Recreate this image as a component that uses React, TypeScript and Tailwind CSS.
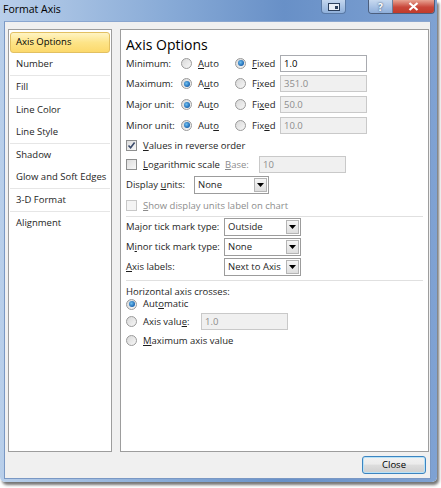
import type { ReactNode } from 'react';

function Radio({ checked = false }: { checked?: boolean }) {
  return (
    <span className="w-[11px] h-[11px] shrink-0 rounded-full border border-[#9a9a9a] bg-[linear-gradient(135deg,#d8d8d8,#f7f7f7)] flex items-center justify-center">
      {checked && (
        <span className="w-[6px] h-[6px] rounded-full bg-[radial-gradient(circle_at_40%_40%,#6fc0f0,#1a64b0_70%)]" />
      )}
    </span>
  );
}

function Check({ checked = false, disabled = false }: { checked?: boolean; disabled?: boolean }) {
  return (
    <span
      className={`w-[11px] h-[11px] shrink-0 border flex items-center justify-center ${
        disabled ? 'border-[#c8c8c8] bg-[#f4f4f4]' : 'border-[#8e8f8f] bg-[linear-gradient(135deg,#dcdcdc,#f8f8f8)]'
      }`}
    >
      {checked && (
        <svg width="9" height="9" viewBox="0 0 9 9">
          <path d="M1.5 4.5 L3.6 6.8 L7.6 1.6" fill="none" stroke="#3a4a6a" strokeWidth="1.6" />
        </svg>
      )}
    </span>
  );
}

function Field({ value, disabled = false, w }: { value: string; disabled?: boolean; w: string }) {
  return (
    <div
      className={`${w} h-[17px] border flex items-center pl-[3px] ${
        disabled ? 'bg-[#f0f0f0] border-[#c9c9c9] text-[#8d8d8d]' : 'bg-white border-[#a9abb0] text-black'
      }`}
    >
      {value}
    </div>
  );
}

function Select({ value, w }: { value: string; w: string }) {
  return (
    <div className={`${w} h-[18px] border border-[#9c9c9c] bg-white flex items-center justify-between pl-[3px] pr-px`}>
      <span className="whitespace-nowrap">{value}</span>
      <span className="w-[13px] h-[14px] border border-[#b5b5b5] bg-[linear-gradient(#f6f6f6,#dedede)] flex items-center justify-center shrink-0">
        <svg width="7" height="4" viewBox="0 0 7 4">
          <path d="M0 0 H7 L3.5 4 Z" fill="#000" />
        </svg>
      </span>
    </div>
  );
}

function UnitRow({ label, auto, fixed, value, autoFixed }: { label: string; auto: ReactNode; fixed: ReactNode; value: string; autoFixed: boolean }) {
  return (
    <div className="h-[20.67px] flex items-center">
      <span className="w-[55px]">{label}</span>
      <Radio checked={!autoFixed} />
      <span className="ml-[6px] w-[37px]">{auto}</span>
      <Radio checked={autoFixed} />
      <span className="ml-[6px] w-[28px]">{fixed}</span>
      <Field value={value} disabled={!autoFixed} w="w-[87px]" />
    </div>
  );
}

const navGroups = [
  ['Axis Options', 'Number'],
  ['Fill'],
  ['Line Color', 'Line Style'],
  ['Shadow', 'Glow and Soft Edges'],
  ['3-D Format'],
  ['Alignment'],
];

export default function App() {
  return (
    <div className="w-[441px] h-[488px] bg-white font-['Open_Sans',sans-serif] text-[9.5px] text-[#1e1e1e] leading-none">
      <div className="w-[437px] h-[482px] flex flex-col bg-[linear-gradient(to_right,#b9cfea,#86a9d6_40%,#6890c7_65%,#7fa2d3)] rounded-b-[5px] shadow-[2px_3px_3px_rgba(0,0,0,0.55)] pl-[4px] pr-[6px] pb-[4px]">
        {/* title bar */}
        <div className="h-[21px] flex items-start shrink-0 relative">
          <span className="mt-[4px] -ml-[1px] text-[10.5px] text-black">Format Axis</span>
          <div className="absolute left-[317px] top-0 w-[25px] h-[14px] rounded-b-[4px] border border-t-0 border-[#5a7aa6] bg-[linear-gradient(#c3d6ee,#8fb0db)] flex items-center justify-center">
            <svg width="12" height="8" viewBox="0 0 12 8">
              <rect x="0.5" y="0.5" width="11" height="7" fill="#e8eef7" stroke="#2b3f5c" />
              <rect x="7" y="3" width="3" height="3" fill="#2b3f5c" />
            </svg>
          </div>
          <div className="absolute left-[364px] top-0 h-[14px] flex rounded-b-[4px] border border-t-0 border-[#4c5f7e] overflow-hidden">
            <div className="w-[24px] bg-[linear-gradient(#c7d9ef,#8eaedb)] flex items-center justify-center border-r border-[#6a7f9c] text-[10px] font-bold text-white [text-shadow:0_0_2px_#1c3150]">?</div>
            <div className="w-[41px] bg-[linear-gradient(#e8a493,#c9473a_55%,#c13a2a)] flex items-center justify-center">
              <svg width="11" height="9" viewBox="0 0 11 9">
                <path d="M1.5 1 L9.5 8 M9.5 1 L1.5 8" stroke="#fff" strokeWidth="2.2" />
              </svg>
            </div>
          </div>
        </div>

        {/* client area */}
        <div className="flex-1 bg-[#f0f0f0] border border-[#7a98c4] border-t-[#8aa6cf] flex flex-col pt-[7px] pl-[3px] pr-[1px] pb-[4px]">
          <div className="flex gap-[8px] h-[423px]">
            {/* nav */}
            <div className="w-[104px] bg-white border border-[#9d9d9d] pt-px px-px">
              {navGroups.map((group, gi) => (
                <div key={gi} className={gi > 0 ? 'border-t border-[#e6e6e6]' : ''}>
                  {group.map((item) =>
                    item === 'Axis Options' ? (
                      <div key={item} className="h-[22px] flex items-center">
                        <div className="w-full h-[21px] rounded-[3px] border border-[#e2c062] bg-[linear-gradient(#fff4c4,#fde488_50%,#fcd96c)] flex items-center pl-[5px] text-black">
                          {item}
                        </div>
                      </div>
                    ) : (
                      <div key={item} className="h-[22px] flex items-center pl-[6px]">
                        {item}
                      </div>
                    ),
                  )}
                </div>
              ))}
            </div>

            {/* options */}
            <div className="flex-1 bg-white border border-[#9d9d9d] px-[5px]">
              <div className="mt-[7px] h-[16px] flex items-center text-[14px] text-black">Axis Options</div>
              <UnitRow label="Minimum:" auto={<><u>A</u>uto</>} fixed={<><u>F</u>ixed</>} value="1.0" autoFixed />
              <UnitRow label="Maximum:" auto={<>A<u>u</u>to</>} fixed={<>F<u>i</u>xed</>} value="351.0" autoFixed={false} />
              <UnitRow label="Major unit:" auto={<>Au<u>t</u>o</>} fixed={<>Fi<u>x</u>ed</>} value="50.0" autoFixed={false} />
              <UnitRow label="Minor unit:" auto={<>Aut<u>o</u></>} fixed={<>Fix<u>e</u>d</>} value="10.0" autoFixed={false} />

              <div className="h-[20px] flex items-center gap-[6px]">
                <Check checked />
                <span><u>V</u>alues in reverse order</span>
              </div>
              <div className="h-[18px] flex items-center">
                <Check />
                <span className="ml-[6px] w-[82px]"><u>L</u>ogarithmic scale</span>
                <span className="w-[34px] text-[#8d8d8d]"><u>B</u>ase:</span>
                <Field value="10" disabled w="w-[87px]" />
              </div>
              <div className="h-[23px] flex items-center">
                <span className="w-[68px]">Display <u>u</u>nits:</span>
                <Select value="None" w="w-[75px]" />
              </div>
              <div className="h-[18px] flex items-center gap-[6px] text-[#8d8d8d]">
                <Check disabled />
                <span><u>S</u>how display units label on chart</span>
              </div>
              <div className="h-px mt-px bg-[#e0e0e0]" />

              <div className="h-[20px] flex items-center">
                <span className="w-[98px]">Major tick mark type:</span>
                <Select value="Outside" w="w-[77px]" />
              </div>
              <div className="h-[20px] flex items-center">
                <span className="w-[98px]">M<u>i</u>nor tick mark type:</span>
                <Select value="None" w="w-[77px]" />
              </div>
              <div className="h-[21px] flex items-center">
                <span className="w-[98px]"><u>A</u>xis labels:</span>
                <Select value="Next to Axis" w="w-[77px]" />
              </div>
              <div className="h-px mt-[2px] bg-[#e0e0e0]" />

              <div className="h-[16px] flex items-end">Horizontal axis crosses:</div>
              <div className="h-[15px] flex items-center gap-[6px]">
                <Radio checked />
                <span>Aut<u>o</u>matic</span>
              </div>
              <div className="h-[20px] flex items-center">
                <Radio />
                <span className="ml-[6px] w-[58px]">Axis valu<u>e</u>:</span>
                <Field value="1.0" disabled w="w-[87px]" />
              </div>
              <div className="h-[18px] flex items-center gap-[6px]">
                <Radio />
                <span><u>M</u>aximum axis value</span>
              </div>
            </div>
          </div>

          <div className="flex justify-end mt-[4px] pr-[3px]">
            <button className="w-[64px] h-[18px] rounded-[3px] border border-[#3c84c0] bg-[linear-gradient(#f2f2f2,#ebebeb_45%,#dddddd_50%,#cfcfcf)] shadow-[inset_0_0_0_1px_#b8e2f8] text-black text-[9.5px]">
              Close
            </button>
          </div>
        </div>
      </div>
    </div>
  );
}
